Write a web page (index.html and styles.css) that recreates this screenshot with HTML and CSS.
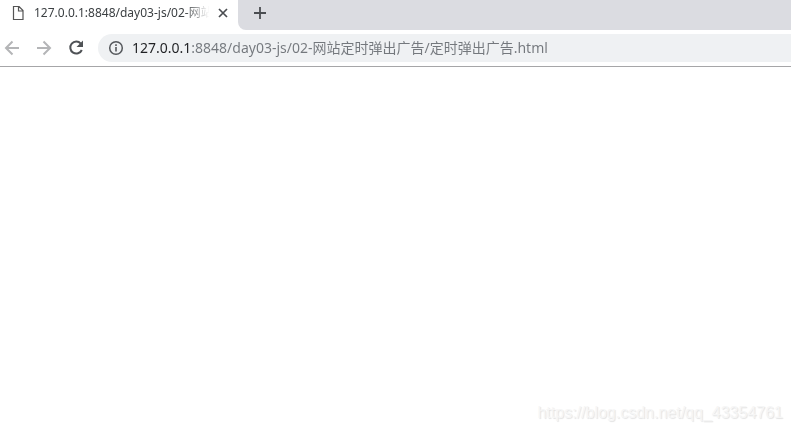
FILE: index.html
```html
<!DOCTYPE html>
<html lang="zh-CN">
<head>
  <meta charset="UTF-8">
  <title>127.0.0.1:8848/day03-js/02-网站定时弹出广告</title>
  <meta name="viewport" content="width=device-width, initial-scale=1.0">
  <link rel="stylesheet" href="styles.css">
</head>
<body>
  <header class="tab-strip">
    <div class="tab">
      <svg class="tab-icon" width="12" height="14" viewBox="0 0 12 14" aria-hidden="true">
        <path d="M1.5 .5h5.500l4 4v9h-9.500zM6.500 .5v4.500h4.500" fill="none" stroke="#555" stroke-width="1.200"/>
      </svg>
      <span class="tab-title">127.0.0.1:8848/day03-js/02-网站</span>
      <button class="icon-button tab-close" aria-label="关闭">
        <svg width="10" height="10" viewBox="0 0 10 10"><path d="M1 1l8 8M9 1l-8 8" stroke="#4a4d51" stroke-width="1.700"/></svg>
      </button>
    </div>
    <div class="strip-rest">
      <button class="icon-button new-tab" aria-label="打开新的标签页">
        <svg width="12" height="12" viewBox="0 0 12 12"><path d="M6 0v12M0 6h12" stroke="#4a4d51" stroke-width="1.800"/></svg>
      </button>
    </div>
  </header>

  <nav class="toolbar">
    <button class="icon-button nav-button" aria-label="后退" disabled>
      <svg width="24" height="20" viewBox="0 0 24 20"><path d="M19 10H6M12.500 3.500L6 10l6.500 6.500" fill="none" stroke="#b4b5b7" stroke-width="2"/></svg>
    </button>
    <button class="icon-button nav-button" aria-label="前进" disabled>
      <svg width="24" height="20" viewBox="0 0 24 20"><path d="M5 10h13M11.500 3.500L18 10l-6.500 6.500" fill="none" stroke="#b4b5b7" stroke-width="2"/></svg>
    </button>
    <button class="icon-button nav-button" aria-label="重新加载">
      <svg width="24" height="20" viewBox="0 0 24 20"><path d="M16.800 5.600A6 6 0 1 0 17.800 12" fill="none" stroke="#4f5256" stroke-width="2"/><path d="M19 2.500v6.500h-6.500z" fill="#4f5256"/></svg>
    </button>
    <div class="address-bar">
      <svg width="16" height="16" viewBox="0 0 16 16" aria-hidden="true"><circle cx="8" cy="8" r="6.300" fill="none" stroke="#55585c" stroke-width="1.500"/><path d="M8 7v4.500M8 4.300v1.700" stroke="#55585c" stroke-width="1.600"/></svg>
      <input class="address-input" type="text" aria-label="地址" spellcheck="false" value="127.0.0.1:8848/day03-js/02-网站定时弹出广告/定时弹出广告.html">
    </div>
  </nav>

  <main class="page">
    <span class="watermark">https://blog.csdn.net/qq_43354761</span>
  </main>
</body>
</html>
```
FILE: styles.css
```css
* {
  box-sizing: border-box;
}
body {
  margin: 0;
  min-height: 100vh;
  display: flex;
  flex-direction: column;
  background-color: #fff;
  font-family: "Noto Sans", "Noto Sans CJK SC", sans-serif;
}
.icon-button {
  display: flex;
  align-items: center;
  justify-content: center;
  flex: none;
  padding: 0;
  border: none;
  background: none;
}
.tab-strip {
  display: flex;
  height: 30px;
}
.tab {
  display: flex;
  align-items: center;
  width: 238px;
  padding: 0 10px 4px 12px;
}
.tab-icon {
  flex: none;
  margin-right: 10px;
}
.tab-title {
  flex: 1;
  white-space: nowrap;
  font-size: 12px;
  line-height: 20px;
  color: #3c4043;
  -webkit-mask-image: linear-gradient(to right, #000 84%, transparent 98%);
  mask-image: linear-gradient(to right, #000 84%, transparent 98%);
}
.tab-close {
  width: 12px;
  height: 16px;
  margin-left: 4px;
}
.strip-rest {
  flex: 1;
  background-color: #dbdce1;
  border-radius: 0 0 0 8px;
}
.new-tab {
  width: 44px;
  height: 26px;
}
.toolbar {
  display: flex;
  align-items: center;
  gap: 8px;
  height: 37px;
  border-bottom: 1px solid #a6a6a8;
}
.nav-button {
  width: 24px;
  height: 28px;
}
.address-bar {
  flex: 1;
  display: flex;
  align-items: center;
  gap: 8px;
  height: 28px;
  margin-left: 2px;
  padding-left: 10px;
  background-color: #eff1f3;
  border-radius: 14px 0 0 14px;
}
.address-input {
  flex: 1;
  min-width: 0;
  height: 28px;
  padding: 0 0 2px;
  border: none;
  outline: none;
  font-family: inherit;
  font-size: 14px;
  /* host part is darker than the path */
  background: linear-gradient(to right, #202124 59px, #74787d 59px);
  -webkit-background-clip: text;
  background-clip: text;
  -webkit-text-fill-color: transparent;
}
.page {
  flex: 1;
  display: flex;
  align-items: flex-end;
  justify-content: flex-end;
  padding: 8px;
}
.watermark {
  font-family: "Liberation Sans", sans-serif;
  font-size: 16px;
  line-height: 20px;
  color: #f6f6f6;
  text-shadow: 1px 1px 1px #e2e2e2;
}
```
